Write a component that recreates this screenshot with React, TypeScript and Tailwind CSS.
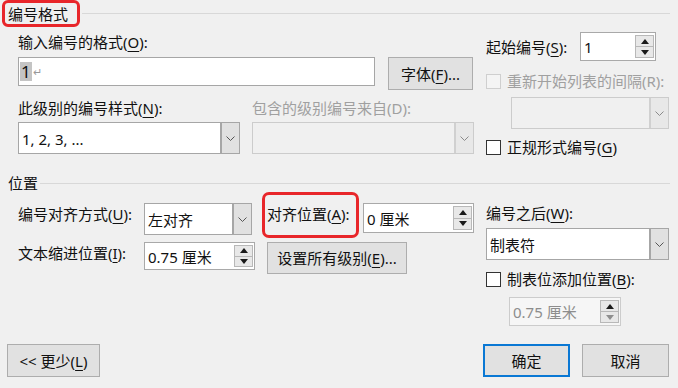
import clsx from "clsx";

const RED = "border-[#e8262a]";

function U({ children }: { children: string }) {
  return <u className="underline decoration-1 underline-offset-[3px]">{children}</u>;
}

function Chevron({ dim }: { dim?: boolean }) {
  return (
    <svg width="9" height="5" viewBox="0 0 9 5">
      <path d="M0.5 0.5 L4.5 4.5 L8.5 0.5" fill="none" stroke={dim ? "#8a8a8a" : "#555"} strokeWidth="1" />
    </svg>
  );
}

function Dropdown({ value, className, disabled }: { value?: string; className: string; disabled?: boolean }) {
  return (
    <div
      className={clsx(
        "flex items-stretch border",
        disabled ? "border-[#cccccc] bg-[#f0f0f0]" : "border-[#a6a6a6] bg-white",
        className
      )}
    >
      <div className="flex flex-1 items-center pl-[3px] pt-[1px]">{value}</div>
      <div
        className={clsx(
          "flex w-[19px] items-center justify-center border-l-2",
          disabled ? "border-[#d0d0d0] bg-[#e8e8e8]" : "border-[#a6a6a6] bg-[#e1e1e1]"
        )}
      >
        <Chevron dim={disabled} />
      </div>
    </div>
  );
}

function Arrow({ up, dim }: { up?: boolean; dim?: boolean }) {
  return (
    <svg width="8" height="5" viewBox="0 0 8 5">
      <path d={up ? "M0 5 L4 0 L8 5 Z" : "M0 0 L8 0 L4 5 Z"} fill={dim ? "#8f8f8f" : "#1a1a1a"} />
    </svg>
  );
}

function Spin({ value, className, disabled }: { value: string; className: string; disabled?: boolean }) {
  return (
    <div
      className={clsx(
        "flex items-center border pl-[3px]",
        disabled ? "border-[#cccccc] bg-[#f6f6f6] text-[#8d8d8d]" : "border-[#a9a9a9] bg-white",
        className
      )}
    >
      <span className="flex-1 pt-[1px]">{value}</span>
      <div className="mr-[1px] flex h-[calc(100%-4px)] w-[19px] flex-col border border-[#b8b8b8]">
        <div className="flex flex-1 items-center justify-center border-b border-[#b8b8b8] bg-[#e8e8e8]">
          <Arrow up />
        </div>
        <div className="flex flex-1 items-center justify-center bg-[#e8e8e8]">
          <Arrow dim={disabled} />
        </div>
      </div>
    </div>
  );
}

function Check({ label, disabled }: { label: React.ReactNode; disabled?: boolean }) {
  return (
    <div className={clsx("flex h-[20px] items-center", disabled && "text-[#a0a0a0]")}>
      <div
        className={clsx(
          "mr-[6px] h-[15px] w-[15px] border",
          disabled ? "border-[#cfcfcf] bg-[#f4f4f4]" : "border-[#333333] bg-white"
        )}
      />
      <span>{label}</span>
    </div>
  );
}

function Btn({ children, className, primary }: { children: React.ReactNode; className: string; primary?: boolean }) {
  return (
    <div
      className={clsx(
        "flex items-center justify-center bg-[#e1e1e1]",
        primary ? "border-2 border-[#0a78d4]" : "border border-[#adadad]",
        className
      )}
    >
      {children}
    </div>
  );
}

function Header({ title, boxed }: { title: string; boxed?: boolean }) {
  return (
    <div className="flex items-center">
      {boxed ? (
        <span className={clsx("ml-[2px] flex h-[27px] items-center rounded-[6px] border-[3px] pl-[3px] pr-[9px]", RED)}>
          {title}
        </span>
      ) : (
        <span className="ml-[8px] h-[20px] leading-[20px]">{title}</span>
      )}
      <div className="ml-[2px] mr-[8px] h-px flex-1 bg-[#d8d8d8]" />
    </div>
  );
}

export default function App() {
  return (
    <div className="flex h-[388px] w-[678px] flex-col overflow-hidden bg-[#f0f0f0] text-[15px] text-[#111] font-['Noto_Sans','Noto_Sans_CJK_SC',sans-serif] leading-[20px]">
      <Header title="编号格式" boxed />

      {/* 编号格式 */}
      <div className="flex pl-[18px]">
        <div className="w-[456px]">
          <div className="mt-[5px] h-[20px]">
            输入编号的格式(<U>O</U>):
          </div>
          <div className="mt-[5px] flex items-start">
            <div className="flex h-[29px] w-[357px] items-center border border-[#a6a6a6] bg-white pl-[1px]">
              <span className="bg-[#c4c4c4] px-[1px] text-[17px] leading-[19px]">1</span>
              <span className="ml-[1px] text-[11px] text-[#999]">↵</span>
            </div>
            <Btn className="ml-[13px] h-[33px] w-[85px]">
              字体(<U>F</U>)...
            </Btn>
          </div>
          <div className="mt-[8px] grid grid-cols-2 gap-x-[12px]">
            <div>
              <div className="h-[20px]">
                此级别的编号样式(<U>N</U>):
              </div>
              <Dropdown value="1, 2, 3, ..." className="mt-[4px] h-[32px]" />
            </div>
            <div>
              <div className="h-[20px] text-[#a0a0a0]">包含的级别编号来自(D):</div>
              <Dropdown disabled className="mt-[4px] h-[32px]" />
            </div>
          </div>
        </div>

        <div className="ml-[12px] w-[183px]">
          <div className="mt-[5px] flex h-[29px] items-center">
            <span className="w-[94px]">
              起始编号(<U>S</U>):
            </span>
            <Spin value="1" className="h-[29px] w-[76px]" />
          </div>
          <div className="mt-[10px]">
            <Check disabled label="重新开始列表的间隔(R):" />
          </div>
          <Dropdown disabled className="ml-[25px] mt-[6px] h-[32px] w-[158px]" />
          <div className="mt-[8px]">
            <Check
              label={
                <>
                  正规形式编号(<U>G</U>)
                </>
              }
            />
          </div>
        </div>
      </div>

      <div className="mt-[16px]">
        <Header title="位置" />
      </div>

      {/* 位置 */}
      <div className="flex pl-[18px]">
        <div className="w-[456px]">
          <div className="mt-[10px] flex items-start">
            <span className="h-[22px] w-[126px] leading-[22px]">
              编号对齐方式(<U>U</U>):
            </span>
            <Dropdown value="左对齐" className="h-[32px] w-[108px]" />
            <span className="relative ml-[15px] h-[22px] w-[96px] leading-[22px]">
              对齐位置(<U>A</U>):
              <span className={clsx("absolute left-[-5px] top-[-11px] h-[46px] w-[97px] rounded-[7px] border-[3px]", RED)} />
            </span>
            <Spin value="0 厘米" className="h-[30px] w-[111px]" />
          </div>
          <div className="mt-[7px] flex items-start">
            <span className="h-[22px] w-[126px] leading-[22px]">
              文本缩进位置(<U>I</U>):
            </span>
            <Spin value="0.75 厘米" className="h-[28px] w-[111px]" />
            <Btn className="ml-[12px] h-[32px] w-[140px]">
              设置所有级别(<U>E</U>)...
            </Btn>
          </div>
        </div>

        <div className="ml-[12px] w-[183px]">
          <div className="mt-[10px] h-[20px]">
            编号之后(<U>W</U>):
          </div>
          <Dropdown value="制表符" className="mt-[5px] h-[32px] w-[183px]" />
          <div className="mt-[9px]">
            <Check
              label={
                <>
                  制表位添加位置(<U>B</U>):
                </>
              }
            />
          </div>
          <Spin disabled value="0.75 厘米" className="ml-[23px] mt-[8px] h-[29px] w-[112px]" />
        </div>
      </div>

      <div className="mt-auto flex items-center pb-[11px] pl-[7px] pr-[9px]">
        <Btn className="h-[33px] w-[93px]">
          &lt;&lt; 更少(<U>L</U>)
        </Btn>
        <div className="flex-1" />
        <Btn primary className="h-[33px] w-[87px]">
          确定
        </Btn>
        <Btn className="ml-[12px] h-[33px] w-[87px]">取消</Btn>
      </div>
    </div>
  );
}
